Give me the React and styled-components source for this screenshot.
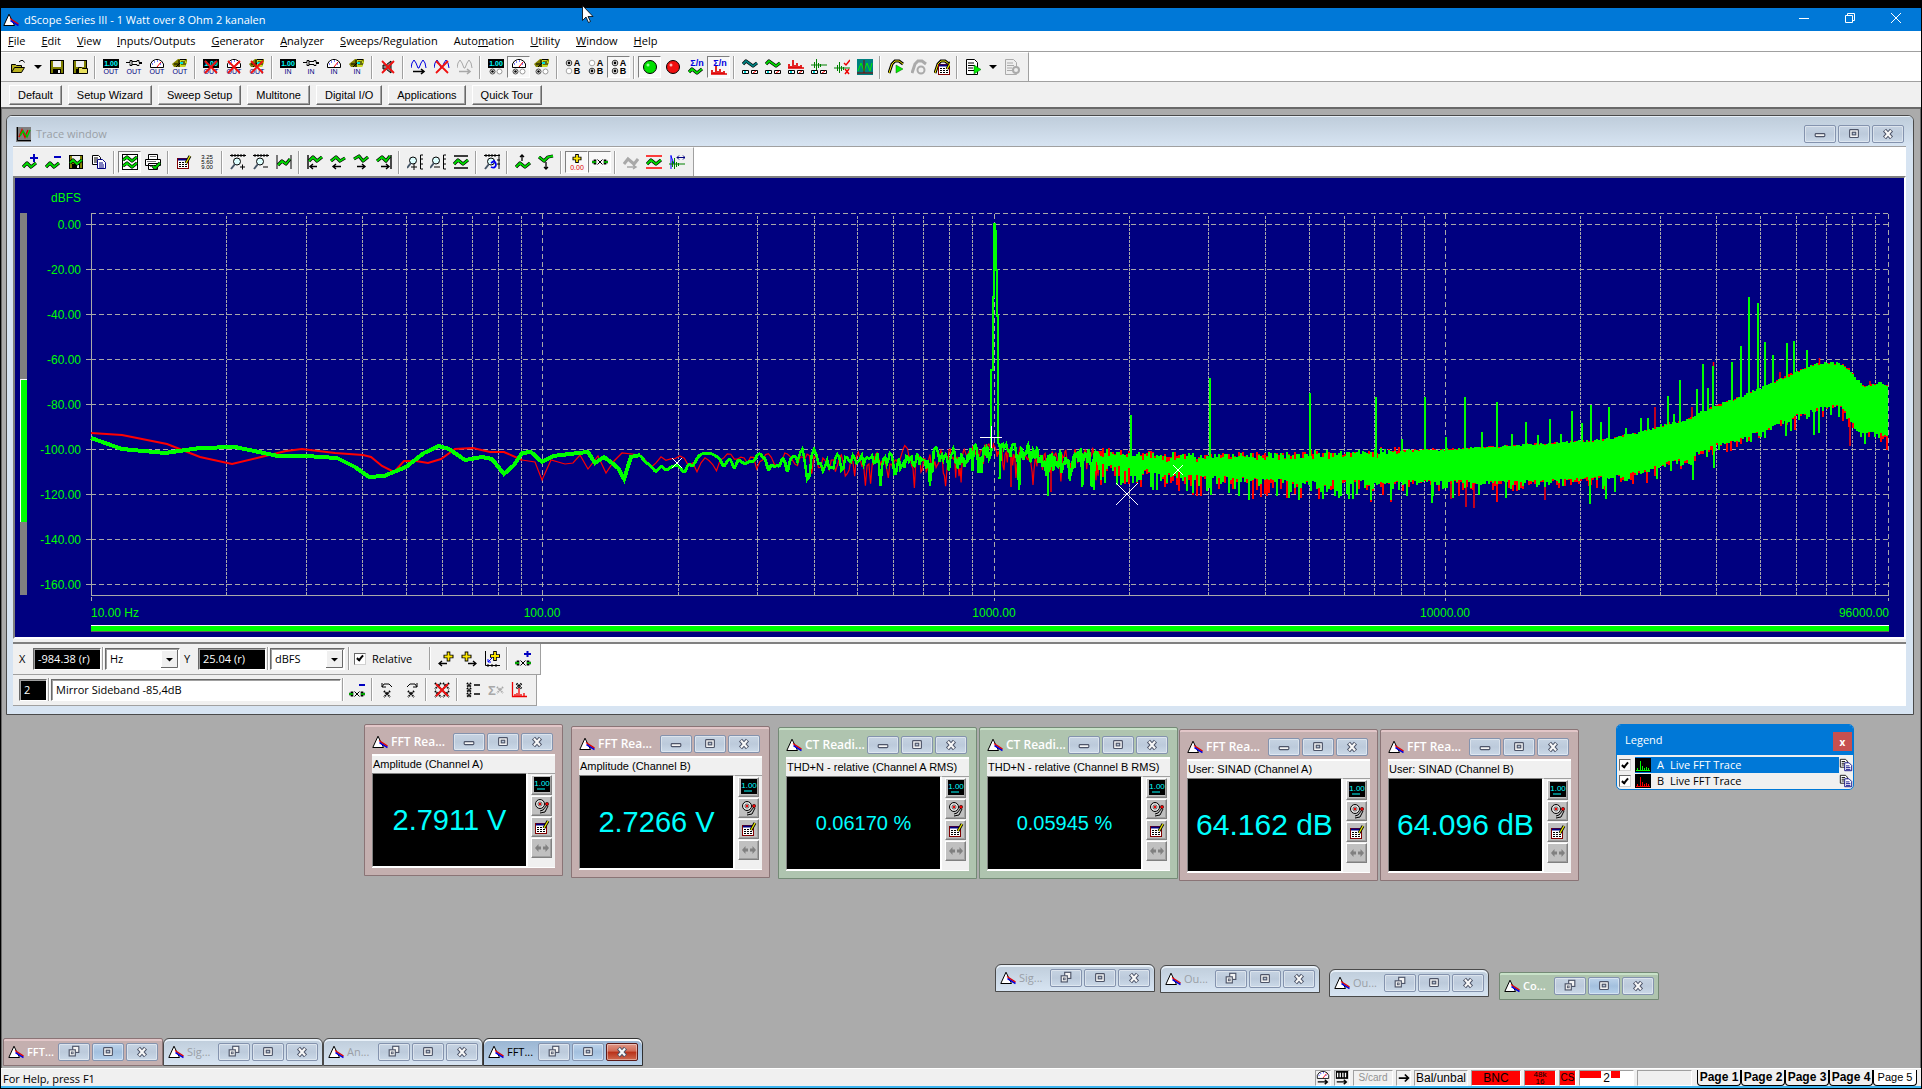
import React from "react";
import styled, { createGlobalStyle, css } from "styled-components";

const UI = '"Open Sans", "Noto Sans", sans-serif';
const SANS = '"Liberation Sans", Arial, sans-serif';

const Global = createGlobalStyle`
  *, *::before, *::after { box-sizing: border-box; }
  body { margin: 0; background: #000; }
  button, input, select { font: inherit; color: inherit; }
`;

/* ---------- application frame ---------- */

const Frame = styled.div`
  min-height: 100vh;
  display: flex;
  flex-direction: column;
  padding: 8px 1px 1px;
  background: #000;
  color: #000;
  font: 11px/16px ${UI};
  position: relative;
`;

const TitleBar = styled.header`
  height: 23px;
  display: flex;
  align-items: center;
  padding: 0 2px;
  background: #0078d7;
  color: #fff;
  h1 { margin: 0 0 0 5px; flex: 1; font: inherit; }
`;

const FrameButton = styled.button`
  width: 46px;
  height: 23px;
  padding: 0 0 3px;
  border: 0;
  background: none;
  color: #fff;
  display: grid;
  place-items: center;
`;

const MenuBar = styled.nav`
  height: 20px;
  display: flex;
  gap: 2px;
  background: #fff;
`;

const MenuItem = styled.button`
  border: 0;
  background: none;
  padding: 0 7px;
  white-space: nowrap;
`;

const ToolStrip = styled.div`
  display: flex;
  background: #fff;
  border-top: 1px solid #a0a0a0;
`;

const ToolGroup = styled.div`
  display: flex;
  align-items: center;
  height: 29px;
  padding: 0 5px;
  background: #f0f0f0;
  border-right: 1px solid #a0a0a0;
  border-top: 1px solid #fff;
`;

const ToolButton = styled.button`
  width: ${(p) => (p.$narrow ? 16 : 23)}px;
  height: 22px;
  padding: 0;
  display: grid;
  place-items: center;
  flex: none;
  background: ${(p) => (p.$on ? "#f8f8f8" : "transparent")};
  border: 1px solid transparent;
  ${(p) => p.$on && css`border-color: #808080 #fff #fff #808080;`}
`;

const Sep = styled.span`
  flex: none;
  width: 2px;
  height: 23px;
  margin: 0 ${(p) => (p.$tight ? 1 : 3)}px;
  border-left: 1px solid #a0a0a0;
  border-right: 1px solid #fff;
`;

const ScriptBar = styled.div`
  display: flex;
  gap: 6px;
  height: 26px;
  padding: 3px 8px 2px;
  background: #f0f0f0;
  border-top: 1px solid #a0a0a0;
`;

const ScriptButton = styled.button`
  padding: 0 8px;
  font: 11px/16px ${SANS};
  background: #f0f0f0;
  border: 1px solid;
  border-color: #fff #696969 #696969 #fff;
  box-shadow: inset -1px -1px #a0a0a0;
  white-space: nowrap;
`;

const Workspace = styled.main`
  flex: 1;
  display: flex;
  flex-direction: column;
  background: #ababab;
  border: solid #696969;
  border-width: 2px 1px 0;
  padding: 6px 6px 0 4px;
`;

/* ---------- child windows ---------- */

const themes = {
  rose: { body: "#c4afaf", hi: "#e2c6c8", line: "#8a7476", text: "#fff", weight: 600 },
  green: { body: "#afc4af", hi: "#c8e2c8", line: "#748a76", text: "#fff", weight: 600 },
  glass: { body: "linear-gradient(#bfcddb, #d7e4f2)", hi: "#e8f0f8", line: "#4a4a4a", text: "#9a9fa6", weight: 400 },
  active: { body: "linear-gradient(#99b4d1, #b9d1ea)", hi: "#fff", line: "#303030", text: "#000", weight: 400 },
};

const TraceFrame = styled.section`
  border: 1px solid #4a4a4a;
  border-radius: 6px 6px 0 0;
  background: #d7e4f2;
  padding: 0 7px 8px 6px;
  overflow: hidden;
`;

const TraceTitle = styled.header`
  display: flex;
  align-items: center;
  height: 30px;
  margin: 0 -7px 0 -6px;
  padding: 5px 9px 0 9px;
  gap: 2px;
  background: linear-gradient(#bfcddb, #d7e4f2);
  color: #9a9fa6;
  border-top: 1px solid #e8f0f8;
  h2 { margin: 0 0 0 3px; flex: 1; font: inherit; }
`;

const CaptionButton = styled.button`
  flex: none;
  width: 32px;
  height: 18px;
  padding: 0;
  display: grid;
  place-items: center;
  border: 1px solid #8493ae;
  border-radius: 2px;
  box-shadow: inset 0 0 0 1px rgba(255, 255, 255, 0.4);
  background: ${(p) =>
    p.$tone === "red"
      ? "linear-gradient(#e09888, #d06a55 45%, #b83018 50%, #cf6a50)"
      : p.$tone === "hot"
      ? "linear-gradient(#bdd3ea, #a3c0de 50%, #b8d2ec)"
      : "linear-gradient(#c6d3e2, #bccadb 50%, #cbd9e8)"};
  ${(p) => p.$tone === "red" && css`border-color: #5c1a18;`}
`;

const PlotFrame = styled.div`
  border: solid;
  border-width: 2px;
  border-color: #808080 #fff #fff #808080;
  background: #000080;
  svg { display: block; width: 100%; height: auto; }
`;

const CursorRows = styled.div`
  margin-top: 3px;
  background: #fff;
  border-top: 2px solid #808080;
  box-shadow: 0 -3px #f0f0f0;
`;

const CursorRow = styled.div`
  display: inline-flex;
  align-items: center;
  height: 31px;
  padding: 0 6px 1px;
  background: #f0f0f0;
  border-right: 1px solid #a0a0a0;
  border-bottom: 1px solid #a0a0a0;
  vertical-align: top;
`;

const FieldLabel = styled.label`
  width: ${(p) => p.$w}px;
  padding-left: ${(p) => p.$pad || 0}px;
`;

const Sunken = css`
  border: 1px solid;
  border-color: #696969 #fff #fff #696969;
  box-shadow: inset 1px 1px #a0a0a0;
  border-radius: 0;
  outline: 0;
`;

const Field = styled.input`
  ${Sunken}
  width: ${(p) => p.$w}px;
  height: 22px;
  padding: 0 4px;
  background: ${(p) => (p.$dark ? "#000" : "#fff")};
  color: ${(p) => (p.$dark ? "#fff" : "#000")};
`;

const PickWrap = styled.span`
  ${Sunken}
  display: flex;
  width: 75px;
  height: 22px;
  background: #fff;
  padding: 1px;
  position: relative;
  select {
    appearance: none;
    flex: 1;
    width: 100%;
    border: 0;
    padding: 0 3px;
    background: none;
    outline: 0;
  }
  svg {
    position: absolute;
    right: 1px;
    top: 1px;
    pointer-events: none;
  }
`;

const Tick = styled.input`
  appearance: none;
  flex: none;
  margin: 0;
  width: 12px;
  height: 12px;
  background: #fff;
  border: 1px solid;
  border-color: #696969 #d0d0d0 #d0d0d0 #696969;
  display: grid;
  place-items: center;
  &:checked::after {
    content: "";
    width: 4px;
    height: 7px;
    margin-top: -2px;
    border: solid #000;
    border-width: 0 2px 2px 0;
    transform: rotate(40deg);
  }
`;

const TickLabel = styled.label`
  display: flex;
  align-items: center;
  gap: 6px;
  padding: 0 14px 0 1px;
`;

/* The lower desktop: reading windows float freely on it. */
const Desktop = styled.div`
  flex: 1;
  min-height: 351px;
  position: relative;
`;

const Floating = styled.section`
  position: absolute;
  left: ${(p) => p.$x}px;
  top: ${(p) => p.$y}px;
  width: ${(p) => p.$w}px;
  background: ${(p) => themes[p.$theme].body};
  border: 1px solid ${(p) => themes[p.$theme].line};
  border-radius: ${(p) => (p.$round ? "6px 6px 0 0" : "2px 2px 0 0")};
  box-shadow: inset 0 2px ${(p) => themes[p.$theme].hi};
  padding: ${(p) => (p.$mini ? "4px" : "8px 7px 7px")};
`;

const FloatTitle = styled.header`
  display: flex;
  align-items: center;
  gap: 2px;
  padding-right: ${(p) => (p.$mini ? 0 : 2)}px;
  color: ${(p) => themes[p.$theme].text};
  h2 {
    margin: 0 0 0 1px;
    flex: 1;
    font: ${(p) => themes[p.$theme].weight} 12px/16px ${UI};
    font-size: ${(p) => (p.$mini ? 11 : 12)}px;
    white-space: nowrap;
  }
`;

const ReadingName = styled.div`
  margin-top: 3px;
  height: 19px;
  padding: 0 1px;
  border-top: 2px solid #fff;
  background: #f0f0f0;
  font: 11px/17px ${SANS};
  white-space: nowrap;
  overflow: hidden;
`;

const ReadingBody = styled.div`
  display: flex;
  height: 95px;
  background: #f0f0f0;
  border-bottom: 1px solid #fff;
`;

const Value = styled.output`
  flex: 1;
  display: grid;
  place-items: center;
  background: #000;
  border: 1px solid;
  border-color: #808080 #fff #fff #808080;
  color: #00ffff;
  font: ${(p) => p.$size}px/34px ${SANS};
  white-space: nowrap;
`;

const SideTools = styled.div`
  display: flex;
  flex-direction: column;
  gap: 1px;
  padding: 1px 3px 0 3px;
  border-top: 1px solid #a0a0a0;
  border-left: 1px solid #fff;
`;

const SideButton = styled.button`
  width: 21px;
  height: 20px;
  padding: 0;
  display: grid;
  place-items: center;
  background: #c0c0c0;
  border: 1px solid;
  border-color: #fff #808080 #808080 #fff;
  box-shadow: inset -1px -1px #a0a0a0;
`;

const LegendBox = styled.section`
  position: absolute;
  left: 1610px;
  top: 9px;
  width: 238px;
  border: 1px solid #0078d7;
  border-radius: 5px;
  background: #f0f0f0;
  overflow: hidden;
`;

const LegendTitle = styled.header`
  display: flex;
  align-items: center;
  height: 30px;
  margin-bottom: 2px;
  padding: 0 1px 0 8px;
  background: #0078d7;
  color: #fff;
  h2 { margin: 0; flex: 1; font: 11px/16px ${UI}; }
`;

const LegendClose = styled.button`
  width: 19px;
  height: 19px;
  margin-top: 3px;
  padding: 0;
  border: 0;
  background: #c75050;
  color: #fff;
  font: bold 10px/16px ${UI};
`;

const LegendRow = styled.div`
  display: flex;
  align-items: center;
  height: 16px;
  padding-left: 2px;
  label {
    flex: 1;
    height: 16px;
    margin-left: 4px;
    display: flex;
    align-items: center;
    gap: 6px;
    background: ${(p) => (p.$on ? "#0078d7" : "transparent")};
    color: ${(p) => (p.$on ? "#fff" : "#000")};
  }
  label span { width: 7px; }
  button { width: 14px; height: 16px; padding: 0; border: 0; background: none; display: grid; place-items: center; }
`;

/* ---------- status bar ---------- */

const StatusBar = styled.footer`
  display: flex;
  align-items: flex-start;
  height: 20px;
  padding: 1px 4px 0 2px;
  gap: 3px;
  background: #f0f0f0;
  border-top: 1px solid #fff;
  border-bottom: 2px solid #3cb4f0;
  overflow: hidden;
  p { margin: 0; flex: 1; line-height: 18px; }
`;

const Panel = styled.span`
  position: relative;
  width: ${(p) => p.$w}px;
  height: 16px;
  display: grid;
  place-items: center;
  overflow: hidden;
  border: 1px solid;
  border-color: #a0a0a0 #fff #fff #a0a0a0;
  background: ${(p) => p.$bg || "#f0f0f0"};
  color: ${(p) => p.$fg || "#000"};
  font: ${(p) => p.$size || 12}px/${(p) => p.$lh || 14}px ${SANS};
  white-space: nowrap;
  text-align: center;
`;

const PageTabs = styled.div`
  display: flex;
  margin-left: 2px;
`;

const PageTab = styled.button`
  width: 44px;
  height: 16px;
  padding: 0;
  border: solid #000;
  border-width: 0 1px 1px;
  border-radius: 0 0 4px 4px;
  background: ${(p) => (p.$plain ? "#fff" : "#f0f0f0")};
  font: ${(p) => (p.$plain ? "11px" : "bold 12px")}/15px ${SANS};
  white-space: nowrap;
`;

const Pointer = styled.svg`
  position: absolute;
  left: 582px;
  top: 5px;
`;

/* ---------- drawings ---------- */

const LIME = "#00d800";

const Wave = ({ d = "M1 10l4-4 5 4 5-4", c = LIME }) => (
  <g fill="none" strokeLinejoin="round">
    <path d={d} stroke="#000" strokeWidth="3.2" />
    <path d={d} stroke={c} strokeWidth="1.8" />
  </g>
);
const L = ({ d, c = "#000", w = 1, f = "none" }) => <path d={d} stroke={c} strokeWidth={w} fill={f} />;
const T = ({ x = 8, y = 15, c = "#000080", s = 7, children, b }) => (
  <text x={x} y={y} fill={c} fontSize={s} textAnchor="middle" fontFamily="Liberation Sans" fontWeight={b ? 700 : 400}>{children}</text>
);
const Num = () => (<><rect x="0" width="16" height="9" fill="#000" /><T y={7} c="#00ffff" s={7} b>1.00</T></>);
const Jack = () => <L d="M0 3.5h4v-2h2v5h-2v-2M6 2.5h5v-1h2v2h3M13 5.5v1h-2v-1H6M13 4.5h3" />;
const Gauge = () => (<><path d="M1.5 8.5V5l2-3 3-1.500h3l3 1.500 2 3v3.500z" fill="#fff" stroke="#000" /><L d="M8 8l4-5" c="#f00" /><path d="M3 5h1M5 3h1M8 2h1M11 5h1" stroke="#00f" /></>);
const Speaker = () => (<><path d="M0 5l6-5h9v3l-2 5H2z" fill="#808000" /><path d="M8 1h4l3 2-2 5H8z" fill="#c8d820" /><path d="M2 5h4M9 3h4M9 5h5M8 .5h6M4 8l4-4M7 8V1" stroke="#000" /><path d="M8 4h3" stroke="#00e0e0" strokeWidth="2" /></>);
const Cross = ({ g }) => <path d={g || "M2 2l12 12M14 2L2 14"} stroke="#f01010" strokeWidth="1.800" />;
const Radios = ({ l, r }) => (<><circle cx="4.500" cy="12.500" r="2.500" fill="#fff" stroke="#444" /><circle cx="11.500" cy="12.500" r="2.500" fill="#fff" stroke="#999" />{l && <circle cx="4.500" cy="12.500" r="1.300" />}{r && <circle cx="11.500" cy="12.500" r="1.300" />}</>);
const ABRadio = ({ a, b }) => (<><circle cx="4" cy="4" r="2.800" fill="#fff" stroke={a ? "#333" : "#aaa"} /><circle cx="4" cy="12" r="2.800" fill="#fff" stroke={b ? "#333" : "#aaa"} />{a && <circle cx="4" cy="4" r="1.400" />}{b && <circle cx="4" cy="12" r="1.400" />}<T x={12} y={7} c="#000" s={9} b>A</T><T x={12} y={15} c="#000" s={9} b>B</T></>);
const Sine = ({ c = "#0000e0" }) => <L d="M0 9l1-5 2-3 2 3 2 5 1 0 2-5 2-3 2 3 1 5" c={c} />;
const Boxes = () => (<><path d="M.5 11.500h6v3h-6zM9.500 11.500h6v3h-6z" fill="#fff" stroke="#000" /><path d="M2 13h2" stroke="#0cc" strokeWidth="2" /><path d="M11 14l3-2" stroke="#f00" /></>);
const Mag = ({ s }) => (<><circle cx="6" cy="6.500" r="3.500" fill="#dff" stroke="#000" /><L d="M4 9l-4 5" w={2} c="#456" />{s}</>);
const Disk = ({ c = "#808000" }) => (<><rect x="1.500" y="1.500" width="13" height="13" fill={c} stroke="#000" /><rect x="4" y="2" width="8" height="6" fill="#f0f0f0" /><rect x="4" y="10" width="8" height="5" fill="#000" /><rect x="9" y="11" width="2" height="3" fill="#f0f0f0" /></>);
const Pages = () => (<><path d="M1.500 1.500h6l2 2v7h-8z" fill="#fff" stroke="#000" /><path d="M6.500 5.500h5l3 3v6h-8z" fill="#fff" stroke="#000080" /><path d="M3 4h4M3 6h3M3 8h3" stroke="#000" /><path d="M8 9h4M8 11h5M8 13h5" stroke="#000080" /></>);
const Table = () => (<><rect x="1.500" y="4.500" width="11" height="10" fill="#fff" stroke="#800000" /><path d="M2 5.500h10" stroke="#000080" strokeWidth="2" /><path d="M3 8.500h8M3 10.500h8M3 12.500h8" stroke="#000" strokeDasharray="2 1" /><path d="M10 9l4-7" stroke="#000" strokeWidth="3" /><path d="M10 9l4-7" stroke="#e8e800" strokeWidth="1.300" /></>);
const Xmark = ({ x = 8, y = 8, r = 3, c = "#000" }) => <path d={`M${x - r} ${y - r}l${2 * r} ${2 * r}M${x + r} ${y - r}l${-2 * r} ${2 * r}`} stroke={c} strokeWidth="2" strokeDasharray="1.300 .7" />;
const Plus = ({ x = 8, y = 5, r = 5 }) => (<><path d={`M${x} ${y - r}v${2 * r}M${x - r} ${y}h${2 * r}`} stroke="#000" strokeWidth="3.600" /><path d={`M${x} ${y - r + 1}v${2 * r - 2}M${x - r + 1} ${y}h${2 * r - 2}`} stroke="#ffe800" strokeWidth="1.800" /></>);
const Markers = ({ y = 8 }) => (<><path d={`M0 ${y}h4M12 ${y}h4M3 ${y - 2.5}v5M13 ${y - 2.5}v5`} stroke="#000" strokeWidth="2.600" /><path d={`M0 ${y}h4M12 ${y}h4`} stroke={LIME} strokeWidth="1.400" /><path d={`M5.5 ${y - 2.5}l5 5M10.5 ${y - 2.5}l-5 5`} stroke="#000" /></>);
const FFT = ({ c = "#e00000", y = 0 }) => <path d={`M1 ${9 + y}v-4M3 ${9 + y}v-2M5 ${9 + y}v-8M7 ${9 + y}v-3M9 ${9 + y}v-5M11 ${9 + y}v-2M13 ${9 + y}v-3M0 ${9 + y}h16`} stroke={c} strokeWidth="1.700" />;
const Impulse = ({ y = 0 }) => <path d={`M0 ${6 + y}h16M3.500 ${3 + y}v6M5.500 ${y}v11M7.500 ${4 + y}v5M9.500 ${5 + y}v3`} stroke="#008000" fill="none" />;
const Sigma = () => <T x={9} y={7} c="#0000e0" s={9} b>Σ/n</T>;
const Curve = ({ c = "#e8e000" }) => (<><L d="M1 14l3-9 3-3h4l4 3" w={3} c={c === "#aaa" ? c : "#000"} /><L d="M1 14l3-9 3-3h4l4 3" c={c} /></>);

const glyphs = {
  open: <><path d="M1.500 13.500v-8h4l1 1h5v2M1.500 13.500l3-5h10l-3 5z" fill="#b8b020" stroke="#000" /><L d="M9 3l2-1.500h2l1.500 2" /></>,
  down: <path d="M4 6h8L8 10z" />,
  save: <Disk />,
  saveAs: <><Disk /><path d="M6.500 14.500v-6h3l1 1h5v5z" fill="#e8e060" stroke="#000" /></>,
  numOut: <><Num /><T>OUT</T></>, jackOut: <><Jack /><T>OUT</T></>, gaugeOut: <><Gauge /><T>OUT</T></>, spkOut: <><Speaker /><T>OUT</T></>,
  numOff: <><Num /><T>OUT</T><Cross /></>, gaugeOff: <><Gauge /><T>OUT</T><Cross /></>, spkOff: <><Speaker /><T>OUT</T><Cross /></>,
  numIn: <><Num /><T>IN</T></>, jackIn: <><Jack /><T>IN</T></>, gaugeIn: <><Gauge /><T>IN</T></>, spkIn: <><Speaker /><T>IN</T></>,
  mute: <><path d="M3 6h3l5-4v12l-5-4H3z" fill="#888" stroke="#000" /><Cross /></>,
  sine: <><Sine /><L d="M2 12.500h11M10 10l3 2.500-3 2.500" w={1.6} /></>,
  sineOff: <><Sine /><Cross /></>,
  sineGray: <><Sine c="#a8a8a8" /><L d="M2 12.500h11M10 10l3 2.500-3 2.500" w={1.6} c="#a8a8a8" /></>,
  numRad: <><Num /><Radios l /></>, gaugeRad: <><Gauge /><Radios l /></>, spkRad: <><Speaker /><Radios l /></>,
  radA: <ABRadio a />, radB: <ABRadio b />, radAB: <ABRadio a b />,
  go: <><circle cx="8" cy="8" r="6.500" fill="#00e000" stroke="#000" /><circle cx="6" cy="6" r="1.500" fill="#9f9" /></>,
  stop: <><circle cx="8" cy="8" r="6.500" fill="#f01010" stroke="#000" /><circle cx="6" cy="6" r="1.500" fill="#fbb" /></>,
  sumWave: <><Sigma /><Wave d="M1 13l3-3 5 4 5-4" /></>,
  sumFft: <><Sigma /><FFT y={6} /></>,
  scopeA: <><Wave d="M1 5l3-3 7 5 4-3" c="#008080" /><Boxes /></>, scopeB: <><Wave d="M1 5l3-3 7 5 4-3" /><Boxes /></>,
  fftBox: <><FFT /><Boxes /></>, impBox: <><Impulse /><Boxes /></>,
  limits: <><Impulse y={3} /><L d="M10 4l2 2 4-5M11 10l4 5M15 10l-4 5" c="#e00" w={1.5} /></>,
  screen: <><rect width="16" height="16" fill="#008080" /><L d="M1 12l3-8 3 8 3-8 3 8 2-8" c="#0e0" /><L d="M7 1v13M0 14h16" c="#800" /></>,
  curveGo: <><Curve /><path d="M8 6l7 4-7 4z" fill="#0e0" stroke="#060" strokeWidth=".5" /></>,
  curveGray: <><Curve c="#aaa" /><circle cx="10" cy="11" r="3.500" fill="none" stroke="#aaa" strokeWidth="2" /></>,
  curveEdit: <><Curve /><g transform="translate(3 1)"><Table /></g></>,
  reportGo: <><path d="M1.500.5h8l3 3v12h-11z" fill="#fff" stroke="#000" /><path d="M3 4h6M3 6.500h7M3 9h5M3 11.500h6" stroke="#000" /><path d="M9 6l7 4.500L9 15z" fill="#0e0" stroke="#060" strokeWidth=".5" /></>,
  reportGray: <><path d="M1.500.5h8l3 3v12h-11z" fill="#eee" stroke="#aaa" /><path d="M3 4h6M3 6.500h7M3 9h5M3 11.500h6" stroke="#aaa" /><circle cx="12" cy="11" r="3" fill="#eee" stroke="#aaa" strokeWidth="2" /></>,

  addTrace: <><Wave d="M1 13l4-4 4 4 5-4" /><path d="M8 4h8M12 0v8" stroke="#0000c0" strokeWidth="2" /></>,
  delTrace: <><Wave d="M1 13l4-4 4 4 5-4" /><path d="M9 3h7" stroke="#0000c0" strokeWidth="2" /></>,
  saveTrace: <><Disk /><Wave d="M2 9l3-3 4 4 5-4" /></>,
  copy: <Pages />,
  overlay: <><rect x=".5" y=".5" width="15" height="15" fill="#fff" stroke="#000" /><Wave d="M1 6l4-3 5 4 5-4" /><Wave d="M1 12l4-3 5 4 5-4" /></>,
  print: <><path d="M3.500 5V.5h9V5M.5 5.500h15v6H.5zM3.500 9.500h9v6h-9z" fill="#fff" stroke="#000" /><path d="M5 2.500h6M2 7.500h9M5 12.500h6" stroke="#777" /><Wave d="M8 12l2 2 5-5" /></>,
  table: <Table />,
  numbers: <><T x={8} y={5} c="#000" s={6}>3.25</T><T x={8} y={10} c="#000" s={6}>5.60</T><T x={8} y={15} c="#000" s={6}>9.00</T></>,
  zoomInX: <><L d="M0 1.500h16M2 0v3M5 0v3M8 0v3M11 0v3M14 0v3" /><g transform="translate(1 1)"><Mag s={<L d="M9 12h5M11.500 9.500v5" />} /></g></>,
  zoomOutX: <><L d="M0 1.500h16M2 0v3M5 0v3M8 0v3M11 0v3M14 0v3" /><g transform="translate(1 1)"><Mag s={<L d="M9 12h5" />} /></g></>,
  fitX: <><L d="M1 1v14M15 1v14" /><Wave d="M2 11l4-4 4 3 4-5" /></>,
  toStart: <><L d="M1 1v14M3 12.500h7M6 10l-3 2.500 3 2.500" w={1.4} /><Wave d="M2 7l4-4 4 4 5-4" /></>,
  left: <><L d="M3 12.500h8M6 10l-3 2.500 3 2.500" w={1.4} /><Wave d="M1 7l5-4 4 4 5-3" /></>,
  right: <><L d="M4 12.500h8M9 10l3 2.500-3 2.500" w={1.4} /><Wave d="M1 5l5-3 4 5 5-4" /></>,
  toEnd: <><L d="M15 1v14M5 12.500h7M10 10l3 2.500-3 2.500" w={1.4} /><Wave d="M1 7l5-4 4 4 4-5" /></>,
  zoomInY: <><Mag s={<L d="M4 13h6M7 10v6" />} /><L d="M16 1h-2.500v14H16M13.500 5H16M13.500 10H16" /></>,
  zoomOutY: <><Mag s={<L d="M4 13h6" />} /><L d="M16 1h-2.500v14H16M13.500 5H16M13.500 10H16" /></>,
  fitY: <><L d="M1 2h14M1 14h14" w={1.3} /><Wave d="M1 10l4-4 5 4 5-4" /></>,
  autoScale: <><L d="M0 1.500h16M2 0v3M5 0v3M8 0v3M11 0v3M15 0v15M13 6h3M13 10h3" /><g transform="translate(1 1)"><Mag /></g><path d="M7 13c4 2 7-2 3-6M7 9l3-2 2 3" stroke="#00e" strokeWidth="1.800" fill="none" /></>,
  up: <><L d="M7 7V1M5 3l2-2 2 2" w={1.3} /><Wave d="M1 13l4-4 5 4 5-4" /></>,
  dn: <><L d="M8 8v7M6 13l2 2 2-2" w={1.3} /><Wave d="M1 3l5 4 4-4 5-1" /></>,
  cursorVal: <><Plus y={4.5} r={4.5} /><T y={15.5} c="#e00000" s={7}>0.00</T></>,
  markers: <Markers />,
  gray: <><L d="M1 10l4-5 6 5 4-5" w={3} c="#a8a8a8" /><L d="M4 13h9M10 11l3 2-3 2" w={1.5} c="#a8a8a8" /></>,
  limitLines: <><L d="M0 2h16M0 14h16" c="#f00" w={1.4} /><Wave d="M1 10l4-4 5 4 5-4" /></>,
  span: <><L d="M2 1v14M2 2l3 8" c="#00f" /><Impulse y={4} /><L d="M8 3.500h8M10 1.500l-2 2 2 2M14 1.500l2 2-2 2" c="#000080" /></>,

  curLeft: <><Plus x={10.5} y={5.5} /><L d="M1 12.500h8M4 10l-3 2.500 3 2.500" w={1.3} /></>,
  curRight: <><Plus x={5.5} y={5.5} /><L d="M7 12.500h8M12 10l3 2.500-3 2.500" w={1.3} /></>,
  curOrigin: <><L d="M1.500 0v14.500H16M4 13v3M8 13v3M12 13v3" /><Plus x={11} y={5} /><L d="M4 11l4-4M4 8v3h3" c="#00f" /></>,
  addMark: <><Markers y={12} /><path d="M9 3h7M12.500 0v6" stroke="#0000c0" strokeWidth="2" /></>,
  delMark: <><Markers y={12} /><path d="M10 3h6" stroke="#0000c0" strokeWidth="2" /></>,
  prevMark: <><Xmark y={12} x={7} /><L d="M2 5l2-3h5l3 3M2 1v4h4" /></>,
  nextMark: <><Xmark y={12} x={8} /><L d="M14 5l-2-3H7L4 5M14 1v4h-4" /></>,
  clearMarks: <><Xmark x={4} y={4} /><Xmark x={12} y={4} /><Xmark x={4} y={12} /><Xmark x={12} y={12} /><Cross /></>,
  markList: <><Xmark x={4} y={3} r={2} /><Xmark x={4} y={8} r={2} /><Xmark x={4} y={13} r={2} /><L d="M9 3h6M9 12h6" w={1.3} /></>,
  sumMarks: <><T x={4} y={13} s={13} c="#a8a8a8" b>Σ</T><Xmark x={12} y={8} c="#a8a8a8" /></>,
  markFft: <><L d="M1.500 0v14.500H16M4 12v3M6 11v3M8 6v9M10 12v3M13 11v3" c="#e00" w={1.3} /><Xmark x={8} y={4} r={2.5} /></>,

  bell: <><circle cx="6" cy="6" r="4.500" fill="#e0e0e0" stroke="#000" /><circle cx="6" cy="6" r="2" fill="#fff" stroke="#000" strokeWidth=".6" /><circle cx="6" cy="6" r="1.200" fill="#e00" /><L d="M6 13l3-1 4-5M6 15l5-1 3-6" /><circle cx="13" cy="6" r="1.700" fill="#e00" stroke="#000" strokeWidth=".5" /></>,
  digits: <><rect width="16" height="15" fill="#000" /><T y={8.500} c="#00ffff" s={8}>1.00</T><path d="M3 12h8" stroke="#0ff" /></>,
  arrows: <path d="M1 8l3.500-4v2.500H7v3H4.500V12zM15 8l-3.500-4v2.500H9v3h2.500V12z" fill="#808080" />,
  toMeter: <><Gauge /><L d="M2 12.500h11M10 10l3 2.500-3 2.500" w={1.5} /></>,
  toBuffer: <><rect x="1" y="0" width="14" height="9" /><path d="M3 2v5M6 2v5M9 2v5M12 2v5" stroke="#fff" strokeWidth="1.500" /><L d="M2 12.500h11M10 10l3 2.500-3 2.500" w={1.5} /></>,
  arrow: <L d="M2 8h11M9 4l4 4-4 4" w={2} />,
};

const Glyph = ({ name, size = 16 }) => (
  <svg width={size} height={size} viewBox="0 0 16 16" aria-hidden="true">{glyphs[name]}</svg>
);

const Logo = () => (
  <svg width="16" height="14" viewBox="0 0 16 14" aria-hidden="true">
    <path d="M.8 12.500L6 1.200l5.500 11.300z" fill="#fff" stroke="#000" />
    <path d="M7.500 7.500l8 5" stroke="#0000e0" strokeWidth="1.500" />
    <path d="M7 5.500l8.500 5.500" stroke="#e00000" strokeWidth="1.300" />
  </svg>
);

const captionGlyphs = {
  min: <rect x="2.500" y="7.500" width="11" height="3.500" rx="1" fill="#f4f4f4" stroke="#4d5468" strokeWidth="1.300" />,
  max: <><rect x="3" y="3" width="10" height="9" rx="1" fill="#f4f4f4" stroke="#4d5468" strokeWidth="1.300" /><rect x="6" y="6" width="4" height="3" fill="#b8c6d8" stroke="#4d5468" strokeWidth="1.300" /></>,
  restore: <><rect x="6.500" y="1.500" width="7" height="7" fill="#f4f4f4" stroke="#4d5468" strokeWidth="1.300" /><rect x="2.500" y="5.500" width="7" height="7" fill="#f4f4f4" stroke="#4d5468" strokeWidth="1.300" /><rect x="5" y="8" width="2" height="2" fill="#fff" stroke="#4d5468" /></>,
  close: <><path d="M4 3.500l8 9M12 3.500l-8 9" stroke="#4d5468" strokeWidth="4.800" /><path d="M4.500 4l7 8M11.500 4l-7 8" stroke="#f8f8f8" strokeWidth="2.400" /></>,
};

const Caption = ({ kind, tone }) => (
  <CaptionButton aria-label={kind} $tone={tone}>
    <svg width="14" height="14" viewBox="0 0 16 16" aria-hidden="true">{captionGlyphs[kind]}</svg>
  </CaptionButton>
);

/* ---------- spectrum plot ---------- */

const X0 = 91.5;
const DECADE = 451.3;
const xOf = (f) => X0 + DECADE * Math.log10(f / 10);
const yOf = (db) => 224.5 - db * 2.25;

const rng = (seed) => () => {
  seed = (seed * 1664525 + 1013904223) >>> 0;
  return (seed + 0.5) / 4294967296;
};

const LOW_GREEN = [[91, 438], [122, 449], [165, 453], [200, 448], [235, 447], [278, 456], [306, 456], [337, 458], [355, 467], [369, 477], [384, 476], [406, 467], [424, 453], [439, 446], [449, 449], [465, 460], [482, 457], [492, 459], [504, 474], [514, 465], [522, 453], [531, 452], [542, 462], [553, 456], [578, 453], [588, 452], [595, 463], [604, 457], [612, 463], [618, 468], [624, 479], [631, 457], [640, 455]];
const LOW_RED = [[91, 433], [122, 435], [167, 444], [200, 457], [232, 464], [265, 456], [286, 451], [302, 449], [335, 453], [363, 455], [371, 457], [382, 466], [394, 472], [404, 461], [416, 461], [428, 463], [441, 459], [455, 449], [473, 448], [490, 452], [504, 452], [522, 460], [535, 462], [542, 480], [551, 460], [565, 464], [573, 463], [580, 455], [588, 469], [598, 456], [606, 473], [614, 461], [622, 453], [640, 455]];

function midBand(seed) {
  const rand = rng(seed);
  const gauss = () => Math.sqrt(-2 * Math.log(rand())) * Math.cos(6.2832 * rand());
  let a = [gauss(), gauss()], b = [gauss(), gauss()];
  const pts = [];
  for (let f = 169; xOf(f) < 1102; f += xOf(f) < 1000 ? 4.6 : 6) {
    const c = [gauss(), gauss()];
    const re = b[0] - 0.6 * (a[0] + c[0]);
    const im = b[1] - 0.6 * (a[1] + c[1]);
    const x = xOf(f);
    const near = Math.max(0, 1 - Math.abs(x - 994) / 60);
    const swing = x < 800 ? 22.5 : 28;
    const y = 461 - near * 10 - swing * 0.5 * Math.log10((re * re + im * im) / 2.2);
    pts.push([x, Math.max(x < 800 ? 453 : 444, Math.min(y, x < 700 ? 476 : 490))]);
    a = b;
    b = c;
  }
  return pts;
}

const ENVELOPE = [[1096, 452, 466], [1150, 456, 474], [1200, 457, 478], [1300, 455, 483], [1400, 452, 484], [1450, 451, 484], [1530, 446, 484], [1600, 442, 480], [1640, 434, 475], [1667, 425, 465], [1683, 423, 462], [1700, 414, 454], [1717, 407, 447], [1733, 401, 444], [1750, 394, 437], [1767, 387, 431], [1783, 379, 422], [1800, 372, 417], [1812, 367, 412], [1824, 365, 409], [1838, 365, 409], [1846, 369, 413], [1852, 376, 426], [1860, 385, 434], [1865, 388, 436], [1867, 387, 435], [1880, 385, 435], [1888, 388, 442]];

function denseBand(seed, spread) {
  const rand = rng(seed);
  let d = "";
  let k = 0;
  for (let x = 1096; x < 1888; x += 2) {
    while (k < ENVELOPE.length - 2 && ENVELOPE[k + 1][0] < x) k += 1;
    const [xa, ta, ba] = ENVELOPE[k];
    const [xb, tb, bb] = ENVELOPE[k + 1];
    const t = (x - xa) / (xb - xa);
    const loose = x < 1400 ? 2 : 1;
    const top = ta + (tb - ta) * t - rand() * 3 * loose + (loose > 1 ? rand() * 6 : 0);
    const tail = Math.min(-Math.log(rand()) * 3.5 * loose, 20);
    const bottom = ba + (bb - ba) * t - 4 + tail * spread;
    d += `M${x + 1} ${top.toFixed(0)}V${bottom.toFixed(0)}`;
  }
  return d;
}

const SPIKES = [[1130.5, 415, 476], [1209.5, 378, 460], [1310, 393, 460], [1376, 397, 460], [1402, 439, 460], [1425, 397, 460], [1446, 437, 460], [1465, 397, 460], [1482, 432, 460], [1497, 402, 460], [1512, 434, 460], [1526, 422, 460], [1538, 435, 450], [1550, 419, 450], [1561, 434, 450], [1572, 411, 450], [1582, 423, 450], [1591, 405, 450], [1601, 422, 450], [1609, 407, 450], [1626, 428, 450], [1641, 418, 440], [1648, 418, 440], [1668, 396, 430], [1674, 414, 430], [1680, 380, 430], [1697, 389, 420], [1703, 364, 420], [1708, 388, 420], [1713, 366, 410], [1732, 362, 410], [1741, 346, 400], [1749, 297, 400], [1758, 303, 400], [1765, 342, 390], [1773, 355, 390], [1787, 343, 380], [1794, 341, 380], [1807, 350, 370], [1048, 455, 496], [1432, 470, 503], [1506, 470, 498], [1590, 470, 504], [1606, 470, 499], [1693, 450, 480], [1714, 440, 468], [1786, 415, 436], [1814, 400, 435], [1819, 400, 433], [1249, 470, 500], [1299, 470, 500], [1323, 470, 499]];
const RED_SPIKES = [[1655, 407, 430], [1692, 407, 430], [1713.5, 362, 370], [1780, 372, 390], [1819.500, 358, 370], [1870, 381, 390], [1451, 482, 499], [1466, 482, 507], [1474, 482, 508], [1545, 482, 500], [1850, 420, 446], [1011, 455, 487], [1051, 455, 492], [998.500, 431, 440]];

const toLine = (pts) => "M" + pts.map(([x, y]) => `${x.toFixed(1)} ${y.toFixed(1)}`).join("L");
const toCurve = (pts) => {
  let d = `M${pts[0][0]} ${pts[0][1]}`;
  for (let i = 1; i < pts.length - 1; i += 1) {
    const [x, y] = pts[i];
    const [nx, ny] = pts[i + 1];
    d += `Q${x.toFixed(1)} ${y.toFixed(1)} ${((x + nx) / 2).toFixed(1)} ${((y + ny) / 2).toFixed(1)}`;
  }
  return d;
};
const toBars = (bars) => bars.map(([x, a, b]) => `M${x} ${a}V${b}`).join("");
const PEAK = "M991 452V370L992.5 370V297L993.5 297V233L994.5 223V227L995.500 230V270L996.500 270V316L997.500 316V440L1001 452";

const midGreen = midBand(11);
const midRed = midBand(77);
const minor = [];
for (let dec = 10; dec <= 10000; dec *= 10) {
  for (let m = 2; m < 10; m += 1) if (dec * m < 96000) minor.push(xOf(dec * m));
}

const Plot = () => (
  <svg viewBox="15 178 1889 459" role="img" aria-label="Spectrum in dBFS against frequency" fontFamily="Liberation Sans, Arial, sans-serif" fontSize="12" fill="#00ff00">
    <rect x="20" y="213" width="7" height="382" fill="#808080" />
    <rect x="20" y="379" width="7" height="143" fill="#00ff00" />
    <path d="M20 379.500h7M20.500 379v143" stroke="#fff" />
    <rect x="91" y="625" width="1798" height="7" fill="#00ff00" />
    <path d="M91 625.500h1798" stroke="#fff" />
    <path d="M91 631.500h1798" stroke="#606060" />
    <g stroke="#a9a9a9" fill="none" shapeRendering="crispEdges">
      <path d="M91.500 213V595.500H1889" />
      <g strokeDasharray="5 3">
        <path d="M91 213.500H1889" />
        {[0, -20, -40, -60, -80, -100, -120, -140, -160].map((v) => (
          <path key={v} d={`M91 ${yOf(v)}H1889`} />
        ))}
      </g>
      <path d="M86 224.500h5M86 269.500h5M86 314.500h5M86 359.500h5M86 404.500h5M86 449.500h5M86 494.500h5M86 539.500h5M86 584.500h5M91.500 597v4" />
      <g strokeDasharray="3 1">
        {minor.map((x) => <path key={x} d={`M${Math.round(x) - 0.5} 216V595`} />)}
      </g>
      <g strokeDasharray="5 3">
        {[100, 1000, 10000, 96000].map((f) => <path key={f} d={`M${Math.floor(xOf(f)) + 0.5} 214V601`} />)}
      </g>
    </g>
    <g fill="none" stroke="#ff0000">
      <path d={toLine(LOW_RED.slice(0, 22))} strokeWidth="2" />
      <path d={toLine(LOW_RED.slice(21).concat(midRed))} strokeWidth="1.200" />
      <path d={denseBand(5, 1.1)} strokeWidth="2" />
      <path d={toBars(RED_SPIKES)} strokeWidth="1.500" />
    </g>
    <g fill="none" stroke="#00ff00" shapeRendering="crispEdges">
      <path d={toLine(LOW_GREEN)} strokeWidth="4" />
      <path d={toCurve(LOW_GREEN.slice(-1).concat(midGreen.filter((p) => p[0] < 800)))} strokeWidth="3" />
      <path d={toLine(midGreen.filter((p) => p[0] > 794 && p[0] < 992))} strokeWidth="2.500" />
      <path d={toLine(midGreen.filter((p) => p[0] > 999))} strokeWidth="2.500" />
      <path d={denseBand(9, 1)} strokeWidth="2" />
      <path d={toBars(SPIKES)} strokeWidth="2" />
      <path d={PEAK} strokeWidth="2" />
    </g>
    <g stroke="#fff" fill="none">
      <path d="M980 437.500h22M991.500 426v22" />
      <path d="M1116 483l22 22M1138 483l-22 22M1173 465l10 10M1183 465l-10 10M672 458l10 10M682 458l-10 10" />
    </g>
    <g textAnchor="end">
      <text x="81" y="202">dBFS</text>
      {[0, -20, -40, -60, -80, -100, -120, -140, -160].map((v) => (
        <text key={v} x="81" y={yOf(v) + 4}>{v.toFixed(2)}</text>
      ))}
      <text x="1889" y="617">96000.00</text>
    </g>
    <text x="91" y="617">10.00 Hz</text>
    <g textAnchor="middle">
      <text x="542" y="617">100.00</text>
      <text x="994" y="617">1000.00</text>
      <text x="1445" y="617">10000.00</text>
    </g>
  </svg>
);

/* ---------- data ---------- */

/* An ampersand marks the mnemonic letter. */
const MENUS = ["&File", "&Edit", "&View", "&Inputs/Outputs", "&Generator", "&Analyzer", "&Sweeps/Regulation", "Auto&mation", "&Utility", "&Window", "&Help"];
const MAIN_TOOLS = "open down save saveAs | numOut jackOut gaugeOut spkOut | numOff gaugeOff spkOff | numIn jackIn gaugeIn spkIn | mute | sine sineOff sineGray | numRad gaugeRad* spkRad | radA radB radAB* | go* stop sumWave sumFft* | scopeA scopeB fftBox impBox limits screen | curveGo curveGray curveEdit | reportGo down reportGray";
const TRACE_TOOLS = "addTrace delTrace saveTrace copy | overlay* print | table numbers | zoomInX zoomOutX fitX | toStart left right toEnd | zoomInY zoomOutY fitY | autoScale | up dn | cursorVal* markers* | gray limitLines span";
const SCRIPTS = ["Default", "Setup Wizard", "Sweep Setup", "Multitone", "Digital I/O", "Applications", "Quick Tour"];

const READINGS = [
  { x: 358, y: 9, theme: "rose", title: "FFT Rea...", name: "Amplitude (Channel A)", value: "2.7911 V", size: 29 },
  { x: 565, y: 11, theme: "rose", title: "FFT Rea...", name: "Amplitude (Channel B)", value: "2.7266 V", size: 29 },
  { x: 772, y: 12, theme: "green", title: "CT Readi...", name: "THD+N - relative (Channel A RMS)", value: "0.06170 %", size: 20 },
  { x: 973, y: 12, theme: "green", title: "CT Readi...", name: "THD+N - relative (Channel B RMS)", value: "0.05945 %", size: 20 },
  { x: 1173, y: 14, theme: "rose", title: "FFT Rea...", name: "User: SINAD (Channel A)", value: "64.162 dB", size: 30 },
  { x: 1374, y: 14, theme: "rose", title: "FFT Rea...", name: "User: SINAD (Channel B)", value: "64.096 dB", size: 30 },
];

const MINIS = [
  { x: 989, y: 249, theme: "glass", title: "Sig..." },
  { x: 1154, y: 250, theme: "glass", title: "Ou..." },
  { x: 1323, y: 254, theme: "glass", title: "Ou..." },
  { x: 1493, y: 257, theme: "green", title: "Co...", mid: "hot" },
  { x: -3, y: 323, theme: "rose", title: "FFT...", mid: "hot" },
  { x: 157, y: 323, theme: "glass", title: "Sig..." },
  { x: 317, y: 323, theme: "glass", title: "An..." },
  { x: 477, y: 323, theme: "active", title: "FFT...", mid: "hot", end: "red" },
];

const MenuText = ({ text }) => {
  const [before, after] = text.split("&");
  return (
    <MenuItem>
      {before}
      <u>{after[0]}</u>
      {after.slice(1)}
    </MenuItem>
  );
};

const Tools = ({ list }) =>
  list.split(" ").map((item, i) => {
    if (item === "|") return <Sep key={i} />;
    const on = item.endsWith("*");
    const name = on ? item.slice(0, -1) : item;
    return (
      <ToolButton key={i} aria-label={name} $on={on} $narrow={name === "down"}>
        <Glyph name={name} />
      </ToolButton>
    );
  });

const Pick = ({ label, value }) => (
  <PickWrap>
    <select aria-label={label} defaultValue={value}>
      <option>{value}</option>
    </select>
    <svg width="17" height="18" viewBox="0 0 17 18" aria-hidden="true">
      <rect width="17" height="18" fill="#f0f0f0" />
      <path d="M.5 17V.5H16" stroke="#fff" fill="none" />
      <path d="M16.500 0v17.500H0" stroke="#696969" fill="none" />
      <path d="M5 8h7l-3.500 3.500z" />
    </svg>
  </PickWrap>
);

const Reading = ({ x, y, theme, title, name, value, size }) => (
  <Floating $x={x} $y={y} $w={199} $theme={theme}>
    <FloatTitle $theme={theme}>
      <Logo />
      <h2>{title}</h2>
      <Caption kind="min" />
      <Caption kind="max" />
      <Caption kind="close" />
    </FloatTitle>
    <ReadingName>{name}</ReadingName>
    <ReadingBody>
      <Value $size={size}>{value}</Value>
      <SideTools>
        {["digits", "bell", "table", "arrows"].map((g) => (
          <SideButton key={g} aria-label={g}><Glyph name={g} /></SideButton>
        ))}
      </SideTools>
    </ReadingBody>
  </Floating>
);

const Mini = ({ x, y, theme, title, mid, end }) => (
  <Floating $mini $x={x} $y={y} $w={160} $theme={theme} $round={theme === "glass" || theme === "active"}>
    <FloatTitle $mini $theme={theme}>
      <Logo />
      <h2>{title}</h2>
      <Caption kind="restore" />
      <Caption kind="max" tone={mid} />
      <Caption kind="close" tone={end} />
    </FloatTitle>
  </Floating>
);

const Legend = () => (
  <LegendBox>
    <LegendTitle>
      <h2>Legend</h2>
      <LegendClose aria-label="Close legend">x</LegendClose>
    </LegendTitle>
    {[["A", "#00ff00", true], ["B", "#ff0000", false]].map(([ch, color, on]) => (
      <LegendRow key={ch} $on={on}>
        <Tick type="checkbox" id={`trace-${ch}`} defaultChecked />
        <label htmlFor={`trace-${ch}`}>
          <svg width="16" height="14" viewBox="0 0 16 14" aria-hidden="true">
            <rect width="16" height="14" />
            <path d="M1 12.500h14M2.500 10v2M5.500 3v9M7.500 8v4M9.500 10v2M11.500 9v3M13.500 10v2" stroke={color} />
          </svg>
          <span>{ch}</span>
          Live FFT Trace
        </label>
        <button aria-label={`Copy trace ${ch}`}><Glyph name="copy" size={14} /></button>
      </LegendRow>
    ))}
  </LegendBox>
);

export default function App() {
  return (
    <Frame>
      <Global />
      <TitleBar>
        <Logo />
        <h1>dScope Series III - 1 Watt over 8 Ohm 2 kanalen</h1>
        <FrameButton aria-label="Minimize"><svg width="10" height="10"><path d="M0 5.500h10" stroke="#fff" /></svg></FrameButton>
        <FrameButton aria-label="Restore"><svg width="10" height="10"><path d="M.5 2.500h7v7h-7zM2.500 2.500v-2h7v7h-2" stroke="#fff" fill="none" /></svg></FrameButton>
        <FrameButton aria-label="Close"><svg width="10" height="10"><path d="M0 0l10 10M10 0L0 10" stroke="#fff" /></svg></FrameButton>
      </TitleBar>
      <MenuBar>
        {MENUS.map((m) => <MenuText key={m} text={m} />)}
      </MenuBar>
      <ToolStrip>
        <ToolGroup><Tools list={MAIN_TOOLS} /></ToolGroup>
      </ToolStrip>
      <ScriptBar>
        {SCRIPTS.map((s) => <ScriptButton key={s}>{s}</ScriptButton>)}
      </ScriptBar>

      <Workspace>
        <TraceFrame>
          <TraceTitle>
            <svg width="15" height="15" viewBox="0 0 15 15" aria-hidden="true">
              <rect width="15" height="15" fill="#808080" />
              <path d="M1.500 0v13.500H15" stroke="#000" fill="none" />
              <path d="M3 10l3-7 3 7 3-7" stroke="#e00000" fill="none" strokeWidth="1.500" />
              <path d="M4 9l3-5 4 6 3-7" stroke="#00c000" fill="none" strokeWidth="1.500" />
            </svg>
            <h2>Trace window</h2>
            <Caption kind="min" />
            <Caption kind="max" />
            <Caption kind="close" />
          </TraceTitle>
          <ToolStrip>
            <ToolGroup><Tools list={TRACE_TOOLS} /></ToolGroup>
          </ToolStrip>
          <PlotFrame><Plot /></PlotFrame>
          <CursorRows>
            <div>
              <CursorRow>
                <FieldLabel htmlFor="cx" $w={14}>X</FieldLabel>
                <Field id="cx" $dark $w={68} defaultValue="-984.38 (r)" />
                <Sep $tight />
                <Pick label="X unit" value="Hz" />
                <FieldLabel htmlFor="cy" $w={18} $pad={4}>Y</FieldLabel>
                <Field id="cy" $dark $w={68} defaultValue="25.04 (r)" />
                <Sep $tight />
                <Pick label="Y unit" value="dBFS" />
                <Sep />
                <TickLabel><Tick type="checkbox" defaultChecked />Relative</TickLabel>
                <Sep />
                <Tools list="curLeft curRight curOrigin | addMark" />
              </CursorRow>
            </div>
            <div>
              <CursorRow>
                <Field aria-label="Marker" $dark $w={28} defaultValue="2" />
                <Sep $tight />
                <Field aria-label="Marker name" $w={290} defaultValue="Mirror Sideband -85,4dB" />
                <Sep $tight />
                <Tools list="delMark | prevMark nextMark | clearMarks | markList sumMarks markFft" />
              </CursorRow>
            </div>
          </CursorRows>
        </TraceFrame>

        <Desktop>
          {READINGS.map((r) => <Reading key={r.name} {...r} />)}
          <Legend />
          {MINIS.map((m) => <Mini key={m.x} {...m} />)}
        </Desktop>
      </Workspace>

      <StatusBar>
        <p>For Help, press F1</p>
        <Panel $w={16}><Glyph name="toMeter" size={14} /></Panel>
        <Panel $w={16}><Glyph name="toBuffer" size={14} /></Panel>
        <Panel $w={40} $fg="#909090" $size={10} $lh={14}>S/card</Panel>
        <Panel $w={15}><Glyph name="arrow" size={14} /></Panel>
        <Panel $w={54}>Bal/unbal</Panel>
        <Panel $w={50} $bg="#f00">BNC</Panel>
        <Panel $w={32} $bg="#f00" $size={8} $lh={7}>48k<br />16</Panel>
        <Panel $w={17} $bg="#f00" $size={10}>CS</Panel>
        <Panel $w={55} $bg="linear-gradient(90deg, #f00 40%, #fff 40% 58%, #f00 58% 76%, #fff 76%) 0 0 / 100% 7px no-repeat, #fff">2</Panel>
        <Panel $w={55} />
        <PageTabs>
          {[1, 2, 3, 4, 5].map((n) => <PageTab key={n} $plain={n === 5}>Page {n}</PageTab>)}
        </PageTabs>
      </StatusBar>

      <Pointer width="12" height="19" viewBox="0 0 12 19" aria-hidden="true">
        <path d="M.5.5v15l3.500-3.500 2.500 5.500 2-1-2.500-5h5z" fill="#fff" stroke="#000" strokeWidth=".8" />
      </Pointer>
    </Frame>
  );
}
